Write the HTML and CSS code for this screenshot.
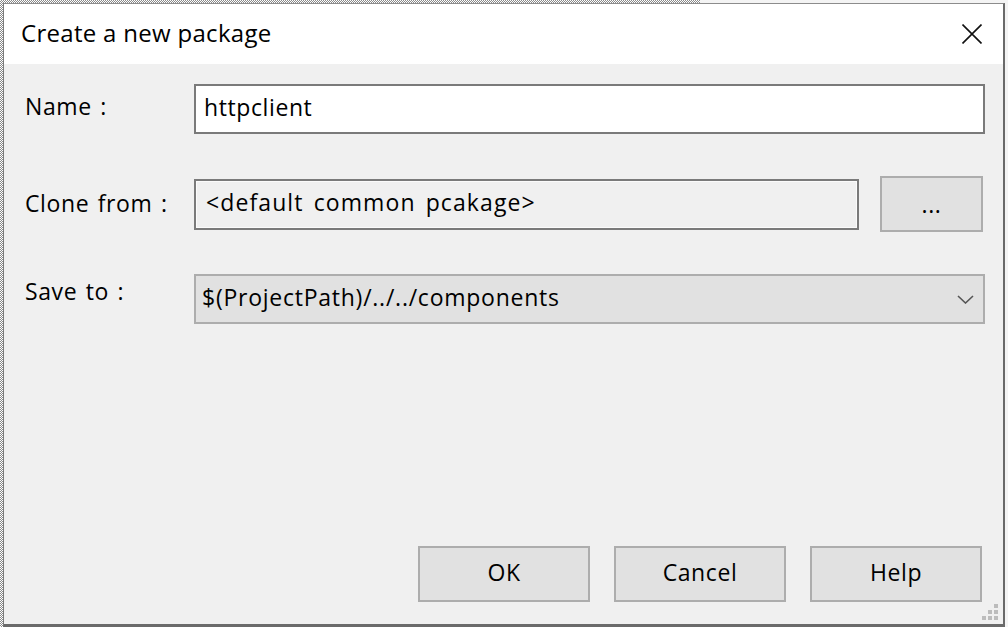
FILE: index.html
```html
<!DOCTYPE html>
<html>
<head>
<meta charset="utf-8">
<link rel="stylesheet" href="styles.css">
</head>
<body>
<div class="window">
  <div class="titlebar">
    <span class="title">Create a new package</span>
    <span class="close">
      <svg width="20" height="20" viewBox="0 0 20 20"><path d="M0.5 0.5 L19.5 19.5 M19.5 0.5 L0.5 19.5" stroke="#111" stroke-width="1.6" fill="none"/></svg>
    </span>
  </div>
  <div class="content">
    <div class="form">
      <div class="row row-name">
        <span class="label">Name :</span>
        <div class="textbox">httpclient</div>
      </div>
      <div class="row row-clone">
        <span class="label label-clone">Clone from :</span>
        <div class="textbox readonly">&lt;default common pcakage&gt;</div>
        <div class="btn browse">...</div>
      </div>
      <div class="row row-save">
        <span class="label label-save">Save to :</span>
        <div class="combo">
          <span class="combo-text">$(ProjectPath)/../../components</span>
          <svg class="chevron" width="17" height="9" viewBox="0 0 17 9"><path d="M1 1 L8.5 8 L16 1" stroke="#555" stroke-width="1.6" fill="none"/></svg>
        </div>
      </div>
    </div>
    <div class="buttons">
      <div class="btn action">OK</div>
      <div class="btn action">Cancel</div>
      <div class="btn action">Help</div>
    </div>
    <div class="grip">
      <i class="empty"></i><i class="empty"></i><i></i>
      <i class="empty"></i><i></i><i></i>
      <i></i><i></i><i></i>
    </div>
  </div>
</div>
</body>
</html>
```

FILE: styles.css
```css
html, body {
  margin: 0;
  padding: 0;
}
body {
  width: 1008px;
  height: 627px;
  overflow: hidden;
  font-family: "Open Sans", "Noto Sans", sans-serif;
  color: #000;
  background:
    linear-gradient(#f4f4f4, #f4f4f4) no-repeat 700px 0 / 308px 3px,
    linear-gradient(#f4f4f4, #f4f4f4) no-repeat right 0 / 3px 100%,
    repeating-conic-gradient(#8a8a8a 0 25%, #ffffff 0 50%) 0 0 / 2px 2px;
  box-sizing: border-box;
  padding: 3px 0 0 3px;
}
.window {
  box-sizing: border-box;
  width: 1002px;
  height: 624px;
  border-top: 1px solid #8c8c8c;
  border-left: 1px solid #7c7c7c;
  border-right: 2px solid #6a6a6a;
  border-bottom: 3px solid #6a6a6a;
  display: flex;
  flex-direction: column;
  background: #f0f0f0;
}
.titlebar {
  height: 60px;
  flex: none;
  background: #fff;
  display: flex;
  align-items: center;
  justify-content: space-between;
  padding: 0 21px 0 17px;
}
.title {
  font-size: 24px;
  letter-spacing: 0.3px;
  line-height: 1;
  margin-top: -3px;
}
.close {
  display: flex;
  width: 20px;
  height: 20px;
}
.content {
  position: relative;
  flex: 1;
  display: flex;
  flex-direction: column;
  justify-content: space-between;
  padding: 20px 18px 22px 21px;
  font-size: 23px;
  letter-spacing: 0.6px;
  word-spacing: 2px;
}
.form {
  display: flex;
  flex-direction: column;
  gap: 42px;
}
.row {
  display: flex;
  align-items: center;
}
.row-name, .row-save {
  height: 50px;
}
.row-clone {
  height: 56px;
}
.label {
  width: 169px;
  flex: none;
  line-height: 1;
  margin-bottom: 5px;
}
.label-clone {
  margin-bottom: 1px;
}
.label-save {
  align-self: flex-start;
  margin-top: 6px;
}
.textbox {
  box-sizing: border-box;
  flex: 1;
  height: 50px;
  border: 2px solid #7a7a7a;
  background: #fff;
  display: flex;
  align-items: center;
  padding: 0 0 4px 8px;
  line-height: 1;
  white-space: nowrap;
}
.textbox.readonly {
  flex: none;
  width: 665px;
  height: 51px;
  background: #f0f0f0;
  box-shadow: inset 0 0 0 1px #fbfbfb;
  padding: 0 0 3px 10px;
  letter-spacing: 1.1px;
  word-spacing: 3px;
}
.btn {
  box-sizing: border-box;
  background: #e1e1e1;
  border: 2px solid #adadad;
  display: flex;
  align-items: center;
  justify-content: center;
  line-height: 1;
  padding-bottom: 4px;
}
.browse {
  width: 103px;
  height: 56px;
  margin-left: 21px;
  padding-bottom: 0;
}
.combo {
  box-sizing: border-box;
  flex: 1;
  height: 50px;
  background: #e1e1e1;
  border: 2px solid #adadad;
  display: flex;
  align-items: center;
  justify-content: space-between;
  padding: 0 9px 0 6px;
  line-height: 1;
}
.combo-text {
  margin-bottom: 3px;
  letter-spacing: 0.75px;
}
.chevron {
  display: block;
}
.buttons {
  display: flex;
  justify-content: flex-end;
  gap: 24px;
  padding-right: 3px;
}
.action {
  width: 172px;
  height: 56px;
}
.grip {
  position: absolute;
  right: 5px;
  bottom: 4px;
  display: grid;
  grid-template-columns: repeat(3, 4px);
  grid-auto-rows: 4px;
  gap: 2px;
}
.grip i {
  display: block;
  background: #bcbcbc;
}
.grip i.empty {
  background: transparent;
}
```
